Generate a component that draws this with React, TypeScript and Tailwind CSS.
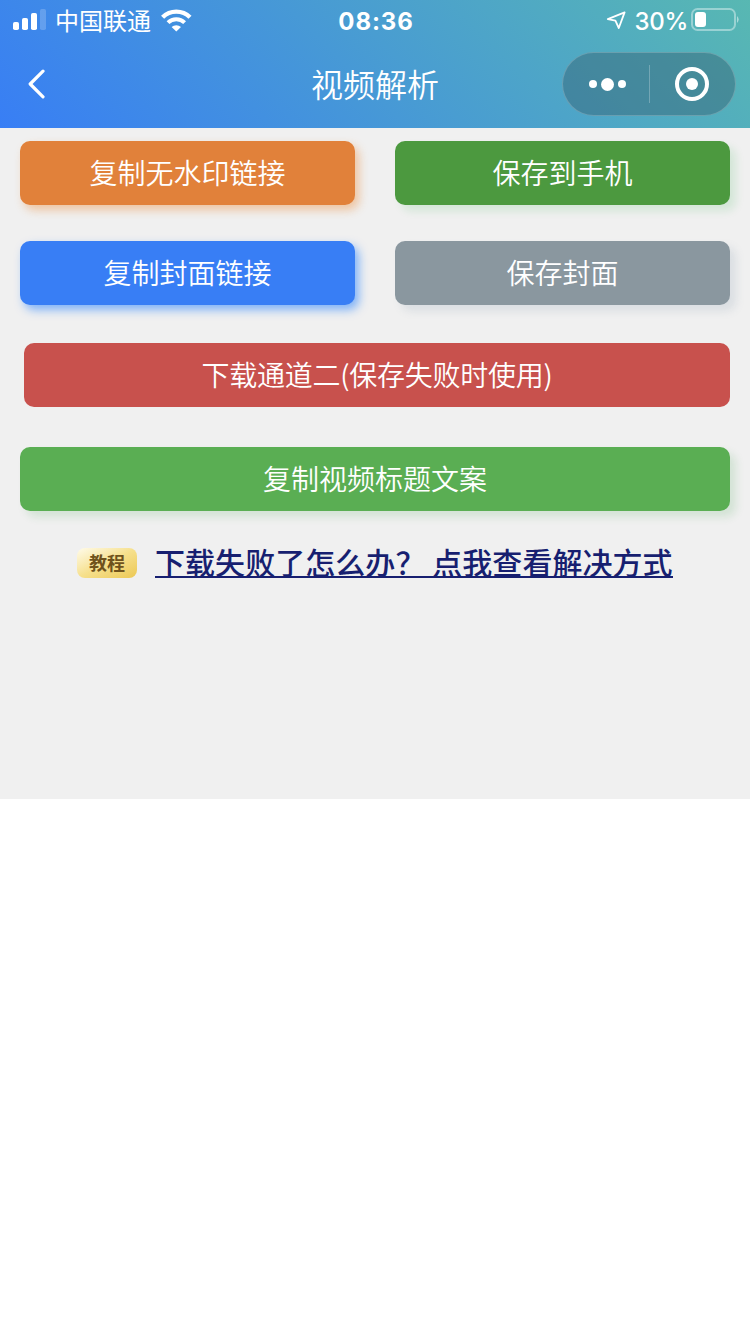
import { clsx } from "clsx";
import type { ReactNode } from "react";

const BUTTON_STYLES = {
  orange: "bg-[#e1813a] shadow-[4px_5px_10px_rgba(235,130,40,0.4)]",
  olive: "bg-[#4c993f] shadow-[6px_6px_8px_rgba(26,170,52,0.13)]",
  blue: "bg-[#387ef5] shadow-[4px_5px_10px_rgba(20,120,255,0.5)]",
  grey: "bg-[#8a979f] shadow-[6px_6px_8px_rgba(114,138,160,0.17)]",
  red: "bg-[#c8514d]",
  green: "bg-[#5aae53] shadow-[6px_6px_8px_rgba(48,156,63,0.15)]",
};

function ActionButton({
  tone,
  className,
  children,
}: {
  tone: keyof typeof BUTTON_STYLES;
  className?: string;
  children: ReactNode;
}) {
  return (
    <button
      className={clsx(
        "flex h-16 items-center justify-center rounded-[10px] pb-[3px] text-[28px] font-[350] leading-none text-white",
        BUTTON_STYLES[tone],
        className,
      )}
    >
      {children}
    </button>
  );
}

function StatusBar() {
  return (
    <div className="grid h-10 grid-cols-3 items-center pl-[13px] pr-[11px] text-white">
      <div className="flex items-center">
        <svg width="33" height="22" viewBox="0 0 33 22" fill="currentColor">
          <rect x="0" y="13" width="6" height="8" rx="1.8" />
          <rect x="9" y="9" width="6" height="12" rx="1.8" />
          <rect x="18" y="4" width="6" height="17" rx="1.8" />
          <rect x="27" y="0" width="6" height="21" rx="1.8" opacity="0.2" />
        </svg>
        <span className="ml-[9px] whitespace-nowrap pb-px text-[24px] leading-none">
          中国联通
        </span>
        <svg
          className="ml-2.5"
          width="31"
          height="23"
          viewBox="0 0 31 23"
          fill="none"
          stroke="currentColor"
        >
          <path d="M1.6 8.2a19.5 19.5 0 0 1 27.4 0" strokeWidth="4.4" />
          <path d="M7 13.7a11.8 11.8 0 0 1 16.6 0" strokeWidth="4" />
          <path
            d="M10.6 18.1a6.8 6.8 0 0 1 9.4 0l-4.7 4.5z"
            fill="currentColor"
            stroke="none"
          />
        </svg>
      </div>
      <span className="pt-[3px] text-center font-[Inter] text-[24px] font-bold leading-none tracking-[0.9px]">
        08:36
      </span>
      <div className="flex items-center justify-end">
        <svg
          width="20"
          height="20"
          viewBox="0 0 20 20"
          fill="none"
          stroke="currentColor"
          strokeWidth="1.8"
          strokeLinejoin="round"
        >
          <path d="M18.6 2.4 1.8 9.2l7.6 1.4 3.4 7.4z" />
        </svg>
        <span className="ml-[9px] pt-[3px] font-[Inter] text-[24px] font-medium leading-none tracking-[-0.3px]">
          30%
        </span>
        <svg
          className="ml-[3px]"
          width="48"
          height="24"
          viewBox="0 0 48 24"
          fill="none"
        >
          <rect
            x="1"
            y="1"
            width="43"
            height="21"
            rx="5.5"
            stroke="white"
            strokeOpacity="0.4"
            strokeWidth="2"
          />
          <rect x="4" y="4" width="11" height="15" rx="3" fill="white" />
          <path d="M46 8q3.4 3.5 0 7z" fill="white" fillOpacity="0.5" />
        </svg>
      </div>
    </div>
  );
}

function NavBar() {
  return (
    <div className="grid h-[88px] grid-cols-3 items-center pl-7 pr-3.5 text-white">
      <svg
        width="18"
        height="30"
        viewBox="0 0 18 30"
        fill="none"
        stroke="currentColor"
        strokeWidth="3.2"
        strokeLinecap="round"
        strokeLinejoin="round"
      >
        <path d="M15 2.2 2.2 15 15 27.8" />
      </svg>
      <h1 className="-ml-3.5 pb-[3px] text-center text-[32px] font-[350] leading-none">
        视频解析
      </h1>
      <div className="flex h-16 w-[174px] items-center justify-self-end rounded-full border border-white/20 bg-[#355f70]/45">
        <div className="flex w-[86px] items-center justify-center gap-1 pl-[3px]">
          <span className="size-2 rounded-full bg-white" />
          <span className="size-[13px] rounded-full bg-white" />
          <span className="size-2 rounded-full bg-white" />
        </div>
        <span className="h-[38px] w-px bg-white/25" />
        <div className="flex flex-1 justify-center pr-0.5">
          <div className="flex size-[34px] items-center justify-center rounded-full border-4 border-white">
            <span className="size-3 rounded-full bg-white" />
          </div>
        </div>
      </div>
    </div>
  );
}

export default function App() {
  return (
    <div
      lang="zh-CN"
      className="min-h-screen w-[750px] overflow-hidden bg-white font-['Noto_Sans_CJK_SC',sans-serif]"
    >
      <header className="h-32 bg-[linear-gradient(45deg,#387ef5,#58b8b2)]">
        <StatusBar />
        <NavBar />
      </header>

      <main className="h-[671px] bg-[#f0f0f0] px-5 pt-[13px]">
        <div className="grid grid-cols-2 gap-x-10 gap-y-9">
          <ActionButton tone="orange">复制无水印链接</ActionButton>
          <ActionButton tone="olive">保存到手机</ActionButton>
          <ActionButton tone="blue">复制封面链接</ActionButton>
          <ActionButton tone="grey">保存封面</ActionButton>
        </div>
        <ActionButton
          tone="red"
          className="ml-1 mt-[38px] w-[706px] tracking-[-0.25px]"
        >
          下载通道二(保存失败时使用)
        </ActionButton>
        <ActionButton tone="green" className="mt-10 w-full">
          复制视频标题文案
        </ActionButton>

        <div className="mt-8 flex h-10 items-center pl-[57px]">
          <span className="flex h-[30px] w-[60px] items-center justify-center rounded-lg bg-linear-to-br from-[#fffbea] via-[#f6e08c] to-[#ecc852] pb-0.5 text-[18px] font-bold leading-none text-[#6f521c]">
            教程
          </span>
          <a className="ml-[18px] h-[30px] whitespace-pre border-b-2 border-[#171f70] text-[30px] font-medium leading-[26px] tracking-[0.05px] text-[#171f70]">
            下载失败了怎么办？ 点我查看解决方式
          </a>
        </div>
      </main>
    </div>
  );
}
